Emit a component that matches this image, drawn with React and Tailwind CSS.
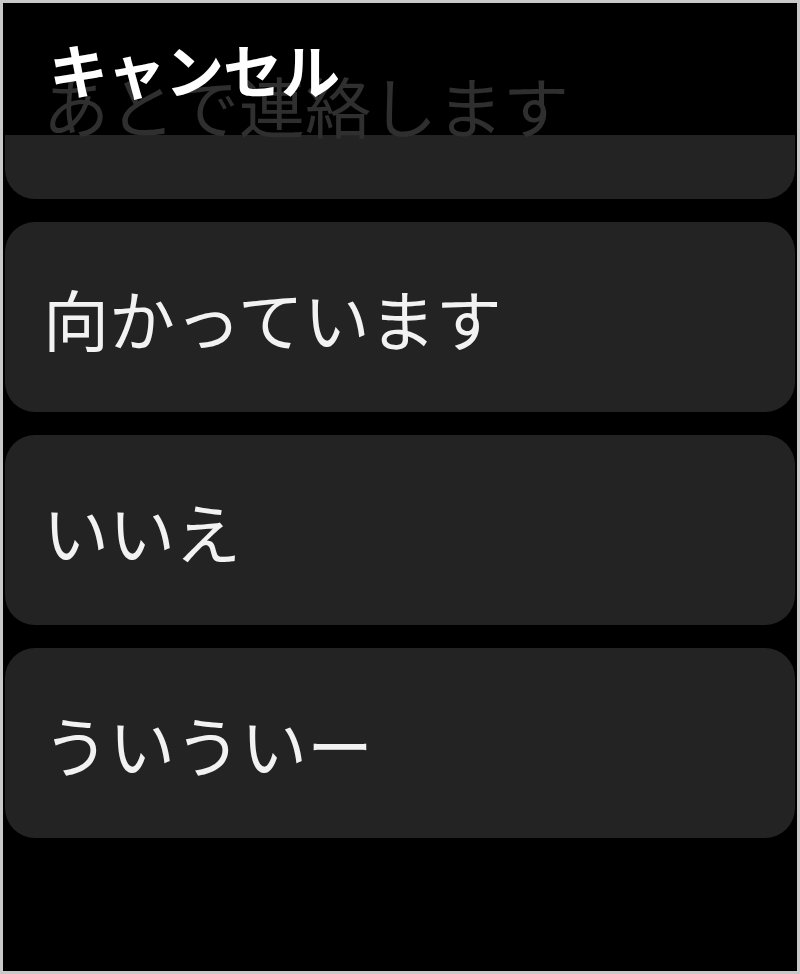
import React from "react";

const replies = ["向かっています", "いいえ", "ういういー"];

const App = () => {
    return (
        <div
            className="w-[800px] h-[974px] bg-black border-[3px] border-[#c9c9c9] relative overflow-hidden"
            style={{ fontFamily: '"Noto Sans CJK JP", "Noto Sans", sans-serif' }}
        >
            {/* Header */}
            <div className="absolute top-[36px] left-[46px] z-10 text-white text-[59px] font-bold leading-none tracking-[-1px]">
                キャンセル
            </div>

            <div className="flex flex-col gap-[23px] px-[2px] pt-[6px]">
                {/* Card scrolled under header, fading out */}
                <div className="h-[190px] rounded-[30px] bg-[linear-gradient(to_bottom,transparent_126px,#232323_126px)] flex items-center pl-[38px]">
                    <span className="text-[66px] leading-none text-[#2f2f2f]">あとで連絡します</span>
                </div>

                {replies.map((r, i) => (
                    <div key={i} className="h-[190px] rounded-[30px] bg-[#232323] flex items-center pl-[38px]">
                        <span className="text-[66px] leading-none text-[#f2f2f2]">{r}</span>
                    </div>
                ))}
            </div>
        </div>
    );
};

export default App;
